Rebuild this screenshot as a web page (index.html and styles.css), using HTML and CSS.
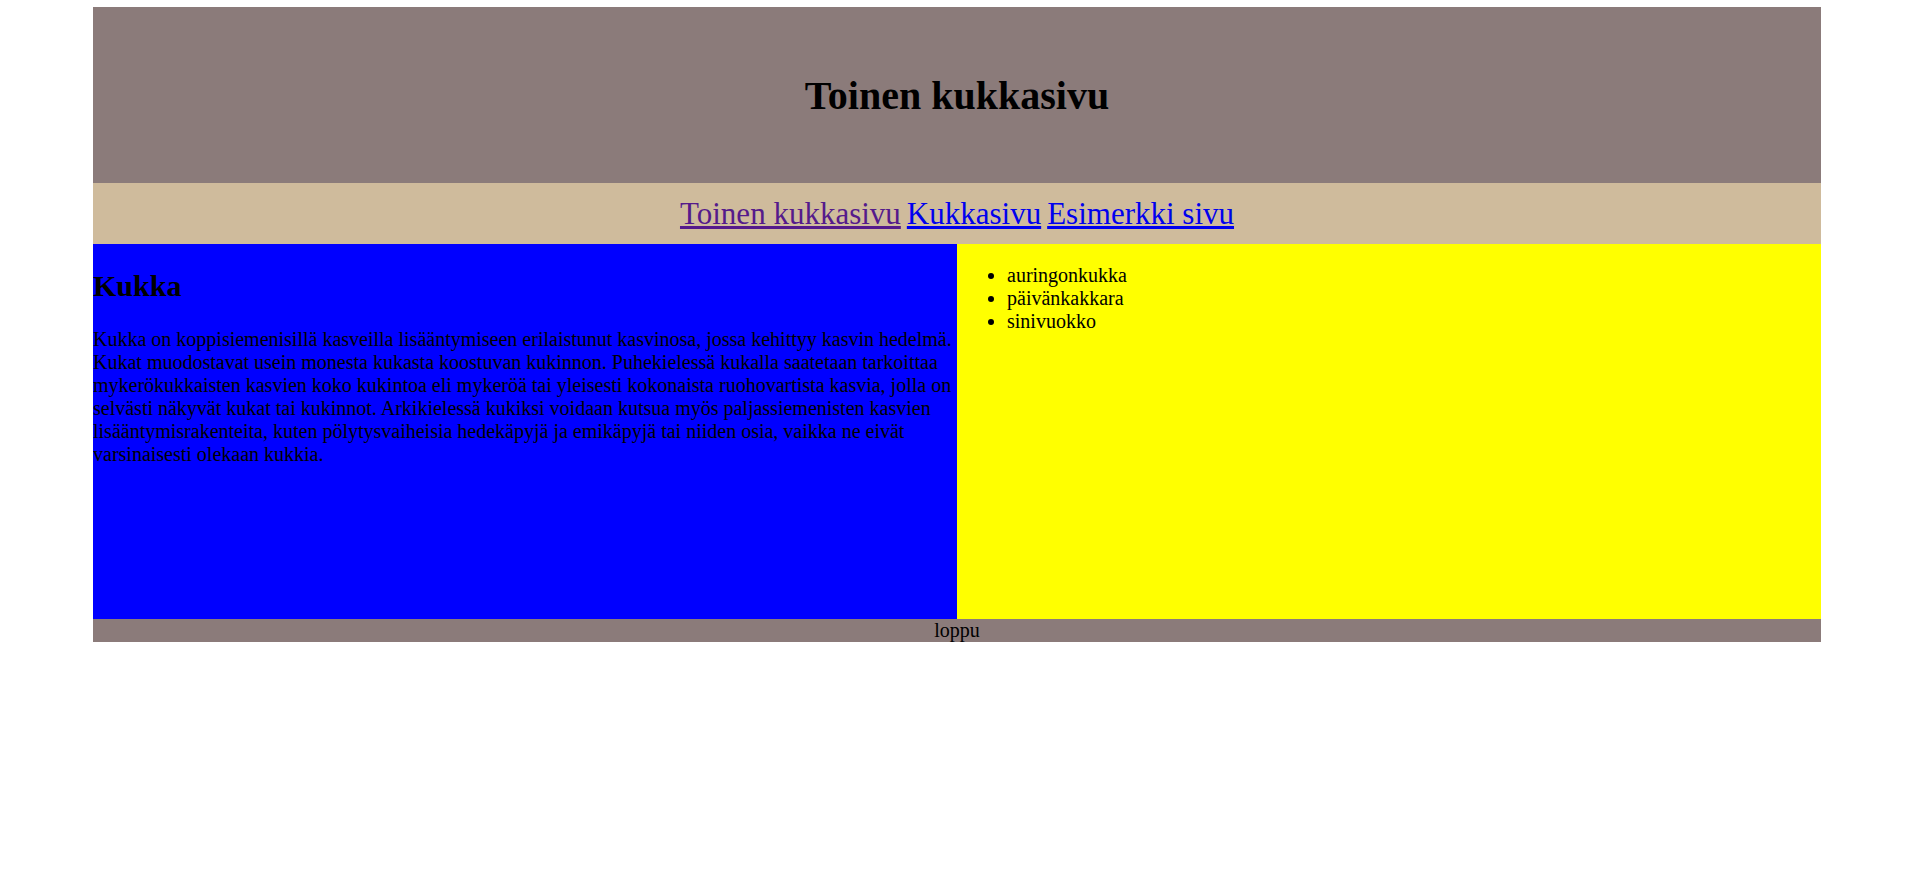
FILE: index.html
```html
<!DOCTYPE html>
<html lang="fi">
<head>
<meta charset="utf-8">
<title>Toinen kukkasivu</title>
<link rel="stylesheet" href="styles.css">
</head>
<body>
<div class="page">
  <header class="top">
    <h1 class="title">Toinen kukkasivu</h1>
  </header>
  <nav class="nav">
    <a class="nav-link visited" href="#">Toinen kukkasivu</a>
    <a class="nav-link" href="#">Kukkasivu</a>
    <a class="nav-link" href="#">Esimerkki sivu</a>
  </nav>
  <main class="main">
    <section class="col col-left">
      <h2 class="sub">Kukka</h2>
      <p class="text">Kukka on koppisiemenisillä kasveilla lisääntymiseen erilaistunut kasvinosa, jossa kehittyy kasvin hedelmä. Kukat muodostavat usein monesta kukasta koostuvan kukinnon. Puhekielessä kukalla saatetaan tarkoittaa mykerökukkaisten kasvien koko kukintoa eli mykeröä tai yleisesti kokonaista ruohovartista kasvia, jolla on selvästi näkyvät kukat tai kukinnot. Arkikielessä kukiksi voidaan kutsua myös paljassiemenisten kasvien lisääntymisrakenteita, kuten pölytysvaiheisia hedekäpyjä ja emikäpyjä tai niiden osia, vaikka ne eivät varsinaisesti olekaan kukkia.</p>
    </section>
    <section class="col col-right">
      <ul class="list">
        <li>auringonkukka</li>
        <li>päivänkakkara</li>
        <li>sinivuokko</li>
      </ul>
    </section>
  </main>
  <footer class="foot">loppu</footer>
</div>
</body>
</html>
```
FILE: styles.css
```css
html, body {
  margin: 0;
  padding: 0;
  background: #ffffff;
}
body {
  font-family: "Liberation Serif", "Times New Roman", serif;
  font-size: 20px;
  color: #000;
}
.page {
  width: 1728px;
  margin: 7px 0 0 93px;
}
.top {
  height: 176px;
  background: #8b7b7a;
  display: flex;
  align-items: center;
  justify-content: center;
}
.title {
  margin: 0;
  font-size: 40px;
  font-weight: bold;
}
.nav {
  height: 61px;
  background: #cfbb9c;
  display: flex;
  align-items: center;
  justify-content: center;
  gap: 6px;
  font-size: 31px;
}
.nav-link {
  color: #0000ee;
  text-decoration: underline;
  text-decoration-thickness: 3px;
}
.nav-link.visited {
  color: #551a8b;
}
.main {
  display: grid;
  grid-template-columns: 1fr 1fr;
  height: 375px;
}
.col-left {
  background: #0000ff;
  overflow: hidden;
}
.col-right {
  background: #ffff00;
}
.sub {
  font-size: 30px;
  margin: 25px 0;
}
.text {
  font-size: 20px;
  margin: 0;
}
.list {
  margin: 20px 0;
  padding-left: 50px;
}
.foot {
  height: 23px;
  background: #8b7b7a;
  text-align: center;
  line-height: 23px;
}
```
